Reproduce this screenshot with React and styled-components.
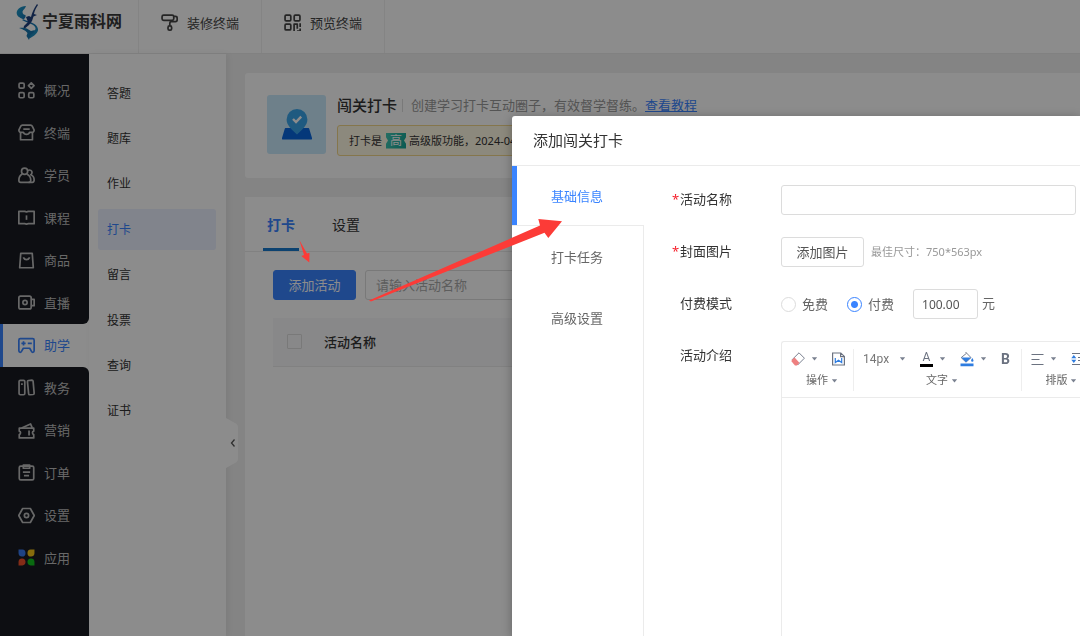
import React from "react"
import styled, { createGlobalStyle, css, ThemeProvider } from "styled-components"

const theme = {
  blue: "#3a84ff",
  text: "#333",
  muted: "#666",
  light: "#999",
  line: "#ebebeb",
  field: "#dcdcdc",
  dark: "#181b22",
  font: `"Noto Sans", "Noto Sans CJK SC", sans-serif`,
  toolFont: `Roboto, "Noto Sans CJK SC", sans-serif`,
}

const topLinks = [
  { label: "装修终端", icon: "roller" },
  { label: "预览终端", icon: "qr" },
]

const mainNav = [
  { label: "概况", icon: "overview" },
  { label: "终端", icon: "store" },
  { label: "学员", icon: "users" },
  { label: "课程", icon: "course" },
  { label: "商品", icon: "bag" },
  { label: "直播", icon: "live", before: true },
  { label: "助学", icon: "game", active: true },
  { label: "教务", icon: "books", after: true },
  { label: "营销", icon: "coupon" },
  { label: "订单", icon: "order" },
  { label: "设置", icon: "setting" },
  { label: "应用", icon: "apps" },
]

const subNav = ["答题", "题库", "作业", "打卡", "留言", "投票", "查询", "证书"]

const steps = ["基础信息", "打卡任务", "高级设置"]

const paths = {
  roller: (
    <>
      <rect x="1" y="1" width="11" height="5" rx="1.5" />
      <path d="M12 2.2h1.600c1 0 1.600.6 1.600 1.500v2c0 1-.6 1.500-1.600 1.500H9.500c-.8 0-1.200.4-1.200 1.200v2.400" />
      <rect x="6.600" y="11.200" width="3.400" height="4" rx="1.400" />
    </>
  ),
  qr: (
    <>
      <rect x="1" y="1" width="5.400" height="5.400" rx="1" />
      <rect x="9.600" y="1" width="5.400" height="5.400" rx="1" />
      <rect x="1" y="9.600" width="5.400" height="5.400" rx="1" />
      <path d="M9.500 16V9.600h3v4.200M15.200 8.800v3.400M15.200 13.600V16h-3" />
    </>
  ),
  overview: (
    <>
      <rect x="1" y="1" width="4.800" height="4.800" rx="1.200" />
      <path d="M12.500.8l2.600 2.600L12.500 6 9.900 3.400z" />
      <rect x="1" y="10" width="4.800" height="4.800" rx="1.200" />
      <rect x="10.100" y="10" width="4.800" height="4.800" rx="1.200" />
    </>
  ),
  store: (
    <>
      <path d="M4.200 1h7.600c.8 0 1.300.3 1.600 1l1.600 3.200c.5 1.300-.4 2.600-1.900 2.600h-2.200c-.4 1.400-1.300 2-2.900 2s-2.500-.6-2.900-2H2.900C1.400 7.800.5 6.500 1 5.200L2.600 2c.3-.7.8-1 1.600-1z" />
      <path d="M2.400 8v6.800h11.200V8M5 4.800h6" />
    </>
  ),
  users: (
    <>
      <circle cx="6.200" cy="4" r="2.900" />
      <path d="M4 6.600C2 7.800.8 9.800.8 12.400c0 1.400.6 2 1.800 2h7.600c1.200 0 1.800-.6 1.800-2 0-2.600-1.400-4.600-3.400-5.600" />
      <path d="M9.400 3.200c1.900-1 4 .2 3.800 2.200-.1.900-.6 1.500-1.200 1.900 2 .7 3.200 2.600 3.200 5 0 1.400-.6 2.100-1.700 2.100H10" />
    </>
  ),
  course: (
    <>
      <path d="M.8 2.200h5.600L8 2.800l1.600-.6h5.600v11.600H9.800l-1.800.4-1.800-.4H.8z" />
      <path d="M8 6v4.200" />
    </>
  ),
  bag: (
    <>
      <path d="M2.600 1.200h10.800l1 13.600H1.600z" />
      <path d="M5 5c.6 1.400 1.600 2.200 3 2.200S10.400 6.400 11 5" />
    </>
  ),
  live: (
    <>
      <rect x=".8" y="2" width="11.600" height="12" rx="1.600" />
      <path d="M12.600 5h2.600v6h-2.600" />
      <circle cx="6.600" cy="8" r="2" />
    </>
  ),
  game: (
    <>
      <path d="M2.200 1.600h11.600c.9 0 1.400.5 1.400 1.400v9.800c0 1.900-1.800 2.100-2.500.7L11 10.600H5l-1.700 2.900c-.7 1.400-2.500 1.200-2.500-.7V3c0-.9.5-1.400 1.400-1.400z" />
      <path d="M3.200 6h4M5.200 4v4M9.200 6h3.800" />
    </>
  ),
  books: (
    <>
      <rect x="1" y="1.200" width="5.400" height="13.600" rx="1.200" />
      <path d="M9.800 1.400l3.300-.3c.6 0 1 .3 1.100.9l1 11.300c0 .8-.3 1.200-1 1.300l-3 .2c-.8 0-1.200-.4-1.200-1L8.900 2.500c0-.7.2-1 .9-1.100z" />
      <path d="M3.700 4v1.600" />
    </>
  ),
  coupon: (
    <>
      <path d="M1.200 5.800h13.600v2.800c-1.600.4-1.600 2.800 0 3.200V15H1.200v-3.200c1.600-.4 1.600-2.800 0-3.200z" />
      <path d="M3.400 5.600l8.400-3.800 1.600 3.800M10.400 8v4.800" />
    </>
  ),
  order: (
    <>
      <rect x="1.200" y="2" width="13.600" height="13" rx="1.400" />
      <path d="M5 1h6v3H5zM4.600 7.600h6.800M5.600 11h4.800" />
    </>
  ),
  setting: (
    <>
      <path d="M4.400 1.400h7.200L15.300 8l-3.700 6.600H4.400L.7 8z" />
      <circle cx="8" cy="8" r="2" />
    </>
  ),
  apps: (
    <g stroke="none">
      <path d="M.5.5h3.600a3.300 3.300 0 1 1-3.600 3.600z" fill="#3a7bf0" />
      <path d="M15.500.5v3.600A3.300 3.300 0 1 1 11.900.5z" fill="#f5c518" />
      <path d="M.5 15.500v-3.600a3.300 3.300 0 1 1 3.600 3.600z" fill="#f0502a" />
      <path d="M15.500 15.500h-3.600a3.300 3.300 0 1 1 3.600-3.600z" fill="#12c21e" />
    </g>
  ),
}

const Icon = ({ name }) => (
  <svg
    width="17"
    height="17"
    viewBox="0 0 16 16"
    fill="none"
    stroke="currentColor"
    strokeWidth="1.6"
    strokeLinejoin="round"
    aria-hidden="true"
  >
    {paths[name]}
  </svg>
)

const LogoMark = () => (
  <svg width="24" height="36" viewBox="0 0 24 36" aria-hidden="true">
    <defs>
      <linearGradient id="logo" x1="0" y1="0" x2="1" y2="1">
        <stop offset="0" stopColor="#1fa0cc" />
        <stop offset=".5" stopColor="#1566a8" />
        <stop offset="1" stopColor="#1f9cc8" />
      </linearGradient>
    </defs>
    <path
      d="M10 2C4 2 0 6 .8 10c.8 3 4 4 7.200 5.500C13 18 21 19 22 25c.5 4-4 7-8.500 9.500L12 31c4-2 8-4 7.500-7C19 20 11 19 6 16c3-1 4-3 3.500-5C8 11 6.500 10 6.500 8 6.500 6 9 5 10 2z"
      fill="url(#logo)"
    />
    <path d="M21 0l1 1c-2 3-3.500 6-4 9l3 1-3.500 1.500L16 17l-3 4-6 5 1-4 4-4-2-5 3-1 2 1c1-4 3-9 6-13z" fill="#20417f" />
    <path d="M3 24c5-1 8 0 12 3l4-1c-1 3-3 4-4.500 4.500L13 36l-2.500-4 1-3C9 26 6 25 3 24z" fill="#1776ad" />
  </svg>
)

const PinArt = () => (
  <svg width="30" height="31" viewBox="0 0 30 31" aria-hidden="true">
    <path d="M4 19h22c1 0 1 .3 1.300 1L30 29c.3 1-.2 1.500-1 1.500H1c-.8 0-1.300-.5-1-1.500l2.700-9c.3-.7.300-1 1.300-1z" fill="#0966de" />
    <path d="M15 0a10.400 10.400 0 0 1 10.400 10.400c0 6-5.400 10-10.400 15-5-5-10.400-9-10.400-15A10.400 10.400 0 0 1 15 0z" fill="#3aa5ea" />
    <path d="M11 10l3 3 5.200-5.400" fill="none" stroke="#fff" strokeWidth="2.400" />
  </svg>
)

const Caret = () => (
  <CaretSvg viewBox="0 0 7 4" aria-hidden="true">
    <path d="M.8.3h5.400L3.500 3.500z" />
  </CaretSvg>
)

const Arrows = () => (
  <ArrowLayer width="600" height="320" viewBox="0 0 600 320" aria-hidden="true">
    <path d="M369 300.500L540 225.500L538.300 219L562 221.300L548.300 238L544.500 232.700L371 301.500z" />
    <path d="M299.300 240L307 253.600L309.500 252.700L309.300 262.500L301.300 256L304 255z" />
  </ArrowLayer>
)

const Toolbar = () => (
  <ToolbarWrapper>
    <ToolGroup>
      <Tools>
        <ToolButton aria-label="清除格式">
          <svg width="14" height="14" viewBox="0 0 14 14" fill="none">
            <path d="M8 .8l5.400 5.400-6.800 6.800L1.200 7.600z" stroke="#7a8190" />
            <path d="M3.600 5.400l4.800 5.400L6 13.400H4L.6 9.600V8.300z" fill="#ee8080" />
          </svg>
          <Caret />
        </ToolButton>
        <ToolButton aria-label="导入文档">
          <svg width="13" height="14" viewBox="0 0 13 14" fill="none">
            <path d="M.6 1h8.200l3.600 3.400V13H.6zM8.600 1v3.600h3.800" stroke="#6b7280" strokeWidth="1.200" />
            <path d="M3.300 6v4.600l3.200-2.400 3.200 2.400V6" stroke="#2f7de0" strokeWidth="1.200" />
          </svg>
        </ToolButton>
      </Tools>
      <GroupLabel>
        操作
        <Caret />
      </GroupLabel>
    </ToolGroup>
    <ToolGroup>
      <Tools>
        <SizePicker>
          <SizeSelect aria-label="字号" defaultValue="14px">
            <option>14px</option>
          </SizeSelect>
          <Caret />
        </SizePicker>
        <ToolButton aria-label="文字颜色">
          <ColorLetter>A</ColorLetter>
          <Caret />
        </ToolButton>
        <ToolButton aria-label="背景颜色">
          <svg width="14" height="16" viewBox="0 0 14 16" fill="none">
            <path d="M5.500 1l5.500 5.600-5 4.600L1.200 6.600 6.600 2.200" stroke="#7a8190" />
            <path d="M1.200 6.400h10L6 11.300zM12.300 7c.7 1.200 1.200 1.800 1.200 2.500a1.200 1.200 0 0 1-2.400 0c0-.7.500-1.300 1.200-2.500z" fill="#2f7de0" />
            <path d="M.5 12.600h13v2.600H.5z" fill="#2f7de0" />
          </svg>
          <Caret />
        </ToolButton>
        <ToolButton aria-label="加粗">
          <Bold>B</Bold>
        </ToolButton>
      </Tools>
      <GroupLabel>
        文字
        <Caret />
      </GroupLabel>
    </ToolGroup>
    <ToolGroup>
      <Tools>
        <ToolButton aria-label="对齐">
          <svg width="13" height="12" viewBox="0 0 13 12" stroke="#6b7280">
            <path d="M.5 1.500h12M.5 6.500h8M.5 11.500h12" />
          </svg>
          <Caret />
        </ToolButton>
        <ToolButton aria-label="行高">
          <svg width="13" height="12" viewBox="0 0 13 12" stroke="#6b7280">
            <path d="M1 .5h12M7 4.500h6M7 7.500h6M1 11.500h12" />
            <path d="M2.800 2L5.300 5.200H.3zM2.800 10L.3 6.800h5z" fill="#2f7de0" stroke="none" />
          </svg>
        </ToolButton>
      </Tools>
      <GroupLabel>
        排版
        <Caret />
      </GroupLabel>
    </ToolGroup>
  </ToolbarWrapper>
)

const ActivityDialog = () => (
  <Backdrop>
    <Dialog role="dialog" aria-labelledby="dialog-title">
      <DialogTitle id="dialog-title">添加闯关打卡</DialogTitle>
      <DialogBody>
        <Steps>
          {steps.map((step, i) => (
            <Step key={step} $active={i === 0}>
              {step}
            </Step>
          ))}
          <StepsRest />
        </Steps>
        <Form>
          <Field>
            <Label htmlFor="name" $required>
              活动名称
            </Label>
            <Input id="name" $width="295px" />
          </Field>
          <Field>
            <Label htmlFor="cover" $required>
              封面图片
            </Label>
            <Button id="cover" type="button">
              添加图片
            </Button>
            <Hint>最佳尺寸：750*563px</Hint>
          </Field>
          <Field>
            <Label as="span">付费模式</Label>
            <Choice>
              <Radio name="pay" />
              免费
            </Choice>
            <Choice>
              <Radio name="pay" defaultChecked />
              付费
            </Choice>
            <Input aria-label="价格" defaultValue="100.00" $width="65px" $small />
            <Unit>元</Unit>
          </Field>
          <Field $grow>
            <Label htmlFor="intro">活动介绍</Label>
            <Editor>
              <Toolbar />
              <EditorArea id="intro" />
            </Editor>
          </Field>
        </Form>
      </DialogBody>
    </Dialog>
  </Backdrop>
)

export default function App() {
  return (
    <ThemeProvider theme={theme}>
      <GlobalStyle />
      <Page>
        <TopBar>
          <Brand href="#">
            <LogoMark />
            <BrandName>宁夏雨科网</BrandName>
          </Brand>
          {topLinks.map(({ label, icon }) => (
            <TopLink key={label} href="#">
              <Icon name={icon} />
              {label}
            </TopLink>
          ))}
        </TopBar>
        <Columns>
          <SideBar>
            <NavList>
              {mainNav.map(({ label, icon, active, before, after }) => (
                <NavCell key={label}>
                  <NavItem href="#" $active={active} $before={before} $after={after}>
                    <Icon name={icon} />
                    {label}
                  </NavItem>
                </NavCell>
              ))}
            </NavList>
            <SideRest />
          </SideBar>
          <SubBar>
            <SubList>
              {subNav.map(label => (
                <SubItem key={label} href="#" $active={label === "打卡"}>
                  {label}
                </SubItem>
              ))}
            </SubList>
            <Collapse aria-label="收起">
              <svg width="12" height="50" viewBox="0 0 12 50" fill="none">
                <path d="M0 0l9 5c2 1 3 2 3 5v30c0 3-1 4-3 5l-9 5z" fill="#fff" />
                <path d="M8.500 21.500L5.500 25l3 3.500" stroke="#555" strokeWidth="1.300" />
              </svg>
            </Collapse>
          </SubBar>
          <Main>
            <Intro>
              <Cover>
                <PinArt />
              </Cover>
              <IntroText>
                <IntroLine>
                  <Title>闯关打卡</Title>
                  <Description>
                    创建学习打卡互动圈子，有效督学督练。
                    <a href="#">查看教程</a>
                  </Description>
                </IntroLine>
                <Notice>
                  打卡是
                  <Badge>高</Badge>
                  高级版功能，2024-04
                </Notice>
              </IntroText>
            </Intro>
            <Panel>
              <Tabs>
                <Tab $active>打卡</Tab>
                <Tab>设置</Tab>
              </Tabs>
              <PanelBody>
                <Actions>
                  <Button type="button" $primary>
                    添加活动
                  </Button>
                  <Input aria-label="活动名称" placeholder="请输入活动名称" $width="200px" />
                </Actions>
                <Table>
                  <thead>
                    <tr>
                      <Th $narrow>
                        <CheckBox aria-label="全选" />
                      </Th>
                      <Th>活动名称</Th>
                    </tr>
                  </thead>
                </Table>
              </PanelBody>
            </Panel>
          </Main>
        </Columns>
      </Page>
      <ActivityDialog />
      <Arrows />
    </ThemeProvider>
  )
}

const GlobalStyle = createGlobalStyle`
  * {
    box-sizing: border-box;
  }

  body {
    margin: 0;
    overflow: hidden;
    background: #f0f0f0;
    color: ${theme.text};
    font: 13px/20px ${theme.font};
  }

  button, input, select, textarea {
    font-family: inherit;
    margin: 0;
  }

  svg {
    flex: none;
  }
`

const Page = styled.div`
  display: flex;
  flex-direction: column;
  min-height: 100vh;
`

const TopBar = styled.header`
  display: flex;
  height: 54px;
  background: #fff;
  border-bottom: 1px solid ${props => props.theme.line};
`

const cell = css`
  display: flex;
  align-items: center;
  padding-bottom: 8px;
  border-right: 1px solid #f0f0f0;
  text-decoration: none;
`

const Brand = styled.a`
  ${cell}
  gap: 2px;
  width: 139px;
  padding-left: 16px;
  padding-bottom: 10px;
`

const BrandName = styled.span`
  color: #3a3a3a;
  font-family: "Liberation Serif", "Noto Sans CJK SC", serif;
  font-size: 16px;
  font-weight: 700;
  white-space: nowrap;
`

const TopLink = styled.a`
  ${cell}
  gap: 9px;
  padding-left: 22px;
  padding-right: 22px;
  color: #444;
`

const Columns = styled.div`
  display: flex;
  flex: 1;
`

const SideBar = styled.nav`
  display: flex;
  flex: none;
  flex-direction: column;
  width: 89px;
  padding-top: 15px;
  background: linear-gradient(${props => props.theme.dark} 15px, #fff 15px);
`

const NavList = styled.div`
  display: grid;
  grid-auto-rows: 1fr;
  height: 510px;
`

const NavCell = styled.div`
  display: flex;
`

const NavItem = styled.a`
  display: flex;
  flex: 1;
  align-items: center;
  gap: 9px;
  padding-left: 18px;
  border-radius: 0 ${props => (props.$after ? "6px" : 0)} ${props => (props.$before ? "6px" : 0)} 0;
  background: ${props => props.theme.dark};
  color: #bdbdbd;
  text-decoration: none;

  ${props =>
    props.$active &&
    css`
      padding-left: 15px;
      border-left: 3px solid ${props.theme.blue};
      background: #fff;
      color: ${props.theme.blue};
    `}
`

const SideRest = styled.div`
  flex: 1;
  background: ${props => props.theme.dark};
`

const SubBar = styled.nav`
  position: relative;
  flex: none;
  width: 137px;
  padding: 19px 10px 0 9px;
  background: #fff;
  box-shadow: 2px 0 6px rgba(0, 0, 0, 0.06);
`

const SubList = styled.div`
  display: grid;
  grid-auto-rows: 1fr;
  gap: 5px;
  height: 358px;
`

const SubItem = styled.a`
  display: flex;
  align-items: center;
  padding: 1px 0 0 9px;
  border-radius: 3px;
  background: ${props => (props.$active ? "#ebf0ff" : "none")};
  color: ${props => (props.$active ? props.theme.blue : props.theme.text)};
  font-size: 12px;
  text-decoration: none;
`

const Collapse = styled.button`
  position: absolute;
  top: 364px;
  left: 100%;
  display: flex;
  padding: 0;
  border: 0;
  background: none;
`

const Main = styled.main`
  display: flex;
  flex: 1;
  flex-direction: column;
  gap: 19px;
  min-width: 0;
  padding: 19px 0 0 19px;
`

const Intro = styled.section`
  display: flex;
  gap: 11px;
  padding: 22px;
  border-radius: 3px 0 0 3px;
  background: #fff;
`

const Cover = styled.div`
  display: flex;
  align-items: center;
  justify-content: center;
  flex: none;
  width: 59px;
  height: 59px;
  border-radius: 3px;
  background: #c8e9fb;
`

const IntroText = styled.div`
  flex: 1;
  min-width: 0;
`

const IntroLine = styled.div`
  display: flex;
  align-items: center;
  margin-bottom: 10px;
  white-space: nowrap;
`

const Title = styled.h1`
  margin: 0;
  font-size: 15px;
  font-weight: 500;
  line-height: 20px;
`

const Description = styled.p`
  margin: 0 0 0 5px;
  padding-left: 8px;
  border-left: 1px solid ${props => props.theme.field};
  color: ${props => props.theme.light};
  line-height: 13px;

  a {
    color: ${props => props.theme.blue};
  }
`

const Notice = styled.div`
  display: flex;
  align-items: center;
  height: 31px;
  padding-left: 11px;
  border: 1px solid #f3d78a;
  border-radius: 3px;
  background: #fff9e3;
  font-size: 11px;
  white-space: nowrap;
`

const Badge = styled.span`
  margin: 0 3px 0 4px;
  padding: 0 4px;
  background: linear-gradient(110deg, #45c9b4, #14a394);
  clip-path: polygon(0 0, 100% 0, 100% 30%, 90% 50%, 100% 70%, 100% 100%, 0 100%, 0 70%, 10% 50%, 0 30%);
  color: #fff;
  font-size: 12px;
  line-height: 16px;
`

const Panel = styled.section`
  flex: 1;
  background: #fff;
`

const Tabs = styled.div`
  display: flex;
  gap: 29px;
  height: 55px;
  padding-left: 18px;
  border-bottom: 1px solid ${props => props.theme.line};
`

const Tab = styled.button`
  padding: 2px 4px 0;
  border: 0;
  border-bottom: 3px solid ${props => (props.$active ? "#1678cc" : "transparent")};
  background: none;
  color: ${props => (props.$active ? props.theme.blue : props.theme.text)};
  font-size: 14px;
  font-weight: ${props => (props.$active ? 700 : 400)};
`

const PanelBody = styled.div`
  padding: 18px 0 0 28px;
`

const Actions = styled.div`
  display: flex;
  gap: 9px;
  margin-bottom: 18px;
`

const Button = styled.button`
  width: 83px;
  height: 30px;
  padding: 0 0 2px;
  border: 1px solid ${props => (props.$primary ? props.theme.blue : props.theme.field)};
  border-radius: 3px;
  background: ${props => (props.$primary ? props.theme.blue : "#fff")};
  color: ${props => (props.$primary ? "#fff" : "#555")};
  font-size: 13px;
`

const Input = styled.input`
  width: ${props => props.$width};
  height: 30px;
  padding: 0 8px;
  border: 1px solid ${props => props.theme.field};
  border-radius: 3px;
  background: #fff;
  color: #555;
  font-size: ${props => (props.$small ? "12px" : "13px")};
  outline: 0;

  &::placeholder {
    color: #aaa;
  }

  ${Actions} & {
    padding: 0 10px;
  }
`

const Table = styled.table`
  width: 100%;
  border-collapse: collapse;
`

const Th = styled.th`
  width: ${props => (props.$narrow ? "51px" : "auto")};
  height: 48px;
  padding: 0 0 0 ${props => (props.$narrow ? "14px" : "0")};
  border-bottom: 1px solid ${props => props.theme.line};
  background: #f8f8f9;
  font-weight: 500;
  text-align: left;
`

const CheckBox = styled.input.attrs({ type: "checkbox" })`
  display: block;
  appearance: none;
  width: 15px;
  height: 15px;
  border: 1px solid ${props => props.theme.field};
  border-radius: 1px;
`

const Backdrop = styled.div`
  position: fixed;
  inset: 0;
  display: flex;
  padding: 116px 0 0 512px;
  background: rgba(0, 0, 0, 0.45);
`

const Dialog = styled.section`
  display: flex;
  flex: 1;
  flex-direction: column;
  min-width: 0;
  border-radius: 3px 0 0 0;
  background: #fff;
  box-shadow: 0 2px 12px rgba(0, 0, 0, 0.3);
`

const DialogTitle = styled.h2`
  margin: 0;
  padding-left: 21px;
  border-bottom: 1px solid ${props => props.theme.line};
  font-size: 15px;
  font-weight: 400;
  line-height: 49px;
`

const DialogBody = styled.div`
  display: flex;
  flex: 1;
`

const Steps = styled.div`
  display: flex;
  flex: none;
  flex-direction: column;
  width: 132px;
`

const Step = styled.button`
  height: 61px;
  padding: 0 0 0 39px;
  border: 0;
  border-right: 1px solid ${props => props.theme.line};
  background: none;
  color: ${props => props.theme.muted};
  font-size: 13px;
  text-align: left;

  ${props =>
    props.$active &&
    css`
      height: 60px;
      border-right: 0;
      border-bottom: 1px solid ${props.theme.line};
      box-shadow: inset 5px 0 ${props.theme.blue};
      color: ${props.theme.blue};
    `}
`

const StepsRest = styled.div`
  flex: 1;
  border-right: 1px solid ${props => props.theme.line};
`

const Form = styled.form`
  display: flex;
  flex: 1;
  flex-direction: column;
  gap: 22px;
  min-width: 0;
  padding: 19px 0 0 36px;
`

const Field = styled.div`
  display: flex;
  flex: ${props => (props.$grow ? "1" : "none")};
`

const Label = styled.label`
  position: relative;
  flex: none;
  width: 101px;
  line-height: 29px;

  ${props =>
    props.$required &&
    css`
      &::before {
        content: "*";
        position: absolute;
        left: -8px;
        color: #f5222d;
      }
    `}
`

const Hint = styled.span`
  margin-left: 7px;
  color: ${props => props.theme.light};
  font-size: 11px;
  line-height: 30px;
`

const Choice = styled.label`
  display: flex;
  align-items: center;
  gap: 6px;
  margin-right: 19px;
  color: ${props => props.theme.muted};
`

const Radio = styled.input.attrs({ type: "radio" })`
  appearance: none;
  width: 15px;
  height: 15px;
  border: 1px solid ${props => props.theme.field};
  border-radius: 50%;

  &:checked {
    border-color: ${props => props.theme.blue};
    background: radial-gradient(${props => props.theme.blue} 3px, #fff 4px);
  }
`

const Unit = styled.span`
  margin-left: 4px;
  color: ${props => props.theme.muted};
  line-height: 28px;
`

const Editor = styled.div`
  display: flex;
  flex: 1;
  flex-direction: column;
  min-width: 0;
  overflow: hidden;
  border: 1px solid ${props => props.theme.line};
  border-width: 1px 0 0 1px;
  border-radius: 3px 0 0 0;
`

const ToolbarWrapper = styled.div`
  display: flex;
  height: 56px;
  padding: 7px 0 6px;
  border-bottom: 1px solid ${props => props.theme.line};
  font-family: ${props => props.theme.toolFont};
`

const ToolGroup = styled.div`
  flex: none;
  padding: 0 8px 0 9px;
  border-right: 1px solid #eee;
`

const Tools = styled.div`
  display: flex;
  align-items: center;
  justify-content: space-between;
  gap: 14px;
  height: 20px;
`

const ToolButton = styled.button`
  display: flex;
  align-items: center;
  gap: 6px;
  padding: 0;
  border: 0;
  background: none;
`

const GroupLabel = styled.div`
  display: flex;
  align-items: center;
  justify-content: center;
  gap: 3px;
  padding: 2px 0 0 8px;
  color: ${props => props.theme.muted};
  font-size: 11px;
`

const SizePicker = styled.div`
  display: flex;
  align-items: center;
`

const SizeSelect = styled.select`
  appearance: none;
  width: 36px;
  padding: 0;
  border: 0;
  background: none;
  color: #777;
  font-size: 12px;
`

const ColorLetter = styled.span`
  width: 13px;
  border-bottom: 3px solid #000;
  color: #6b7280;
  font-size: 12px;
  line-height: 13px;
  text-align: center;
`

const Bold = styled.span`
  padding-right: 3px;
  color: #6b7280;
  font-size: 14px;
  font-weight: 700;
`

const CaretSvg = styled.svg`
  width: 7px;
  height: 4px;
  fill: #7a8190;
`

const EditorArea = styled.textarea`
  flex: 1;
  border: 0;
  outline: 0;
  resize: none;
`

const ArrowLayer = styled.svg`
  position: fixed;
  top: 0;
  left: 0;
  fill: #fc3b37;
  pointer-events: none;
`
